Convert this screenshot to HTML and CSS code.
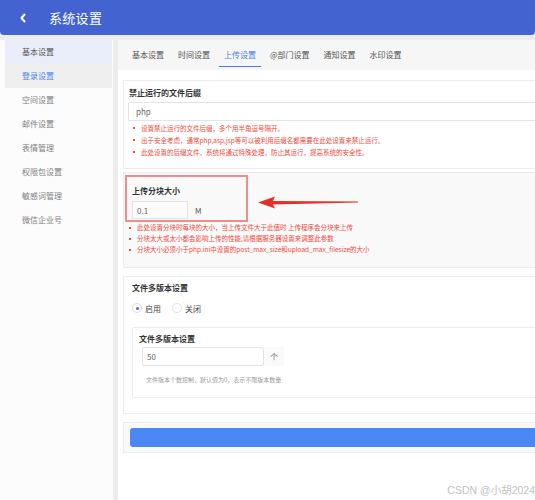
FILE: index.html
```html
<!DOCTYPE html>
<html lang="zh">
<head>
<meta charset="utf-8">
<title>系统设置</title>
<link rel="stylesheet" href="styles.css">
</head>
<body>
<header class="topbar">
  <span class="back"><svg width="8" height="10" viewBox="0 0 8 10"><polyline points="5.5,1.5 2.5,5 5.5,8.5" fill="none" stroke="#fff" stroke-width="2" stroke-linecap="round" stroke-linejoin="round"/></svg></span>
  <h1 class="title">系统设置</h1>
</header>
<div class="layout">
  <aside class="sidebar">
    <ul class="menu">
      <li class="menu-item hover">基本设置</li>
      <li class="menu-item active">登录设置</li>
      <li class="menu-item">空间设置</li>
      <li class="menu-item">邮件设置</li>
      <li class="menu-item">表情管理</li>
      <li class="menu-item">权限包设置</li>
      <li class="menu-item">敏感词管理</li>
      <li class="menu-item">微信企业号</li>
    </ul>
  </aside>
  <main class="main">
    <nav class="tabs">
      <span class="tab">基本设置</span>
      <span class="tab">时间设置</span>
      <span class="tab current">上传设置</span>
      <span class="tab">@部门设置</span>
      <span class="tab">通知设置</span>
      <span class="tab">水印设置</span>
    </nav>
    <div class="content">
      <section class="card card-ext">
        <div class="label">禁止运行的文件后缀</div>
        <div class="input wide">php</div>
        <ul class="notes">
          <li>设置禁止运行的文件后缀，多个用半角逗号隔开。</li>
          <li>出于安全考虑，通常php,asp,jsp等可以被利用后缀名都需要在此处设置来禁止运行。</li>
          <li>此处设置的后缀文件，系统将通过特殊处理，防止其运行，提高系统的安全性。</li>
        </ul>
      </section>
      <section class="card card-gray card-chunk">
        <div class="chunk-box">
          <div class="label">上传分块大小</div>
          <div class="row">
            <div class="input small">0.1</div>
            <span class="unit">M</span>
          </div>
        </div>
        <svg class="arrow" width="106" height="22" viewBox="0 0 106 22"><polygon points="3,11.5 20,5.5 18,10 103,10.6 103,11.6 18,13.5 20,17.5" fill="#e3302a"/></svg>
        <ul class="notes tight">
          <li>此处设置分块时每块的大小，当上传文件大于此值时 上传程序会分块来上传</li>
          <li>分块太大或太小都会影响上传的性能,请根据服务器设置来调整此参数</li>
          <li>分块大小必须小于php.ini中设置的post_max_size和upload_max_filesize的大小</li>
        </ul>
      </section>
      <section class="card card-versions">
        <div class="label">文件多版本设置</div>
        <div class="radios">
          <label class="radio"><span class="dot on"></span>启用</label>
          <label class="radio"><span class="dot"></span>关闭</label>
        </div>
        <div class="inner">
          <div class="label">文件多版本设置</div>
          <div class="row">
            <div class="input medium">50</div>
            <span class="addon">个</span>
          </div>
          <div class="hint">文件版本个数控制，默认值为0，表示不限版本数量</div>
        </div>
      </section>
      <section class="card card-gray card-actions">
        <div class="btn"></div>
      </section>
    </div>
  </main>
</div>
<div class="watermark">CSDN @小胡2024</div>
</body>
</html>
```
FILE: styles.css
```css
* { box-sizing: border-box; }
html, body { margin: 0; padding: 0; }
body {
  width: 535px;
  height: 500px;
  overflow: hidden;
  position: relative;
  background: #ececec;
  font-family: "Noto Sans CJK SC", "Noto Sans", sans-serif;
  color: #333;
}
.topbar {
  height: 35px;
  background: #4363d0;
  border-radius: 0 0 4px 4px;
  display: flex;
  align-items: center;
  padding-left: 19px;
}
.back { display: flex; width: 10px; height: 10px; align-items: center; }
.title {
  margin: 0 0 0 20px;
  font-size: 13px;
  font-weight: 400;
  color: #fff;
  line-height: 1;
  letter-spacing: 0.3px;
}
.layout {
  display: flex;
  padding-top: 5px;
  height: 465px;
}
.sidebar {
  width: 113px;
  background: #fcfcfc;
  padding-left: 5px;
  padding-right: 1px;
  flex-shrink: 0;
}
.menu { list-style: none; margin: 0; padding: 0; }
.menu-item {
  height: 24px;
  line-height: 24px;
  font-size: 8px;
  color: #808080;
  padding-left: 17px;
}
.menu-item.hover { background: #e9eefa; color: #555; }
.menu-item.active { background: #efefef; color: #4a86f0; }
.main {
  margin-left: 5px;
  flex: 1;
  background: #fff;
  overflow: hidden;
}
.tabs {
  height: 30px;
  background: #f6f6f6;
  display: flex;
  padding-left: 9px;
  gap: 4px;
}
.tab {
  font-size: 8px;
  color: #555;
  line-height: 30px;
  padding: 0 5px;
  position: relative;
}
.tab.current { color: #4a7be6; }
.tab.current::after {
  content: "";
  position: absolute;
  left: 0; right: 0; bottom: 3px;
  height: 1px;
  background: #4a7be6;
}
.content {
  padding: 10px 0 0 5px;
  margin-right: -40px;
}
.card {
  border: 1px solid #ececec;
  background: #fff;
  position: relative;
}
.card-gray { background: #f9f9f9; }
.label {
  font-size: 8px;
  font-weight: 700;
  color: #333;
  line-height: 12px;
}
.input {
  border: 1px solid #e4e4e4;
  background: #fff;
  font-size: 8px;
  color: #666;
  padding-left: 7px;
  display: flex;
  align-items: center;
}
.notes {
  list-style: none;
  margin: 0;
  padding: 0 0 0 5px;
}
.notes li {
  font-size: 6.5px;
  color: #ee4a3c;
  line-height: 12px;
  white-space: nowrap;
  position: relative;
  padding-left: 8px;
}
.notes li::before {
  content: "";
  position: absolute;
  left: 0; top: 5px;
  width: 2px; height: 2px;
  background: #ee4a3c;
}
.notes.tight li { line-height: 11px; }
.notes.tight li::before { top: 4.5px; }
.card-ext { padding: 6px 0 10px 4px; }
.card-ext .label { padding-left: 1px; }
.input.wide { height: 19px; margin-top: 3px; margin-bottom: 1px; }
.card-chunk { margin-top: 3px; padding: 2px 0 12px 1px; }
.chunk-box {
  width: 123px;
  height: 47px;
  border: 2px solid #f08c8c;
  padding: 8px 0 0 5px;
}
.row { display: flex; align-items: center; margin-top: 4px; }
.input.small { width: 56px; height: 18px; background: #fbfbfb; padding-left: 4px; }
.unit { font-size: 8px; color: #555; margin-left: 7px; }
.arrow { position: absolute; left: 131px; top: 18px; }
.card-chunk .notes { padding-left: 4px; }
.card-versions { margin-top: 8px; padding: 5px 0 15px 8px; }
.radios { display: flex; gap: 11px; margin-top: 8px; height: 12px; align-items: center; }
.radio { display: flex; align-items: center; font-size: 8px; color: #444; }
.dot {
  width: 10px; height: 10px;
  border-radius: 50%;
  border: 1px solid #e2e2e2;
  background: #fff;
  margin-right: 3px;
  display: flex; align-items: center; justify-content: center;
}
.dot.on { border-color: #d3ddf3; }
.dot.on::after {
  content: "";
  width: 3px; height: 3px;
  border-radius: 50%;
  background: #3f6fe0;
}
.inner {
  margin-top: 13px;
  border: 1px solid #ececec;
  border-radius: 2px;
  padding: 5px 0 12px 6px;
}
.inner .row { margin-top: 2px; }
.input.medium { width: 122px; height: 19px; margin-left: 3px; padding-left: 4px; border-radius: 2px; }
.addon {
  width: 20px; height: 19px;
  display: flex; align-items: center; justify-content: center;
  font-size: 8px; color: #666;
  background: #fafafa;
}
.hint {
  margin-top: 9px;
  padding-left: 7px;
  font-size: 6px;
  color: #9a9a9a;
  line-height: 10px;
}
.card-actions { margin-top: 8px; padding: 5px 0 5px 6px; }
.btn { height: 19px; background: #4b88f6; border-radius: 3px; }
.watermark {
  position: absolute;
  right: 0;
  bottom: 3px;
  font-size: 10.5px;
  color: #c2c2c2;
  font-family: "Liberation Sans", "Noto Sans CJK SC", sans-serif;
}
```
